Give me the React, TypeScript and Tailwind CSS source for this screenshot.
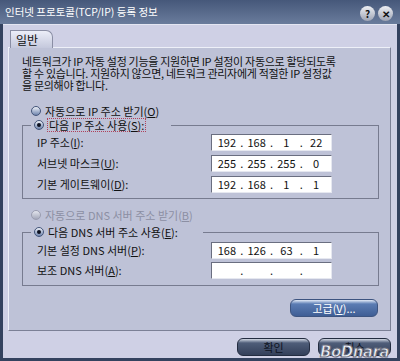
import React from 'react'

const FONT = { fontFamily: '"Noto Sans CJK KR", "Noto Sans", sans-serif' }

function Radio({ checked, disabled }: { checked?: boolean; disabled?: boolean }) {
  return (
    <span
      className={`inline-flex items-center justify-center w-[10px] h-[10px] rounded-full border ${
        disabled ? 'border-[#9a9db0] bg-gradient-to-b from-[#e4e6ee] to-[#a4a8ba]' : 'border-[#44557a] bg-gradient-to-b from-[#eef1f8] to-[#6f84ad]'
      }`}
    >
      {checked && <span className="w-[4px] h-[4px] rounded-full bg-[#0c1020]" />}
    </span>
  )
}

function Mn({ children }: { children: React.ReactNode }) {
  return <span className="underline underline-offset-1">{children}</span>
}

function IpBox({ parts }: { parts: string[] }) {
  return (
    <div className="w-[121px] h-[17px] bg-white border border-t-[#6a6e80] border-l-[#6a6e80] border-b-[#e6e8f0] border-r-[#e6e8f0] flex items-center px-[3px] text-[11px] text-[#111]">
      {parts.map((p, i) => (
        <React.Fragment key={i}>
          <span className="w-[24px] text-center">{p}</span>
          {i < 3 && <span className="w-[6px] text-center">.</span>}
        </React.Fragment>
      ))}
    </div>
  )
}

function Row({ label, parts }: { label: React.ReactNode; parts: string[] }) {
  return (
    <div className="flex items-center justify-between h-[17px] pl-[14px] pr-[46px]">
      <span>{label}</span>
      <IpBox parts={parts} />
    </div>
  )
}

function Btn({ children, light }: { children: React.ReactNode; light?: boolean }) {
  return (
    <div
      className={`h-[18px] rounded-[6px] flex items-center justify-center text-[11px] border ${
        light
          ? 'w-[88px] border-[#3d5480] text-white bg-gradient-to-b from-[#e4ebf7] from-0% via-[#5b7cb3] via-25% to-[#3f5e95]'
          : 'w-[73px] border-[#232c40] text-[#0d1220] bg-gradient-to-b from-[#d4d9e4] from-0% via-[#4f5d79] via-25% to-[#34405a]'
      }`}
    >
      {children}
    </div>
  )
}

export default function App() {
  return (
    <div className="w-[400px] h-[361px] bg-[#34425f] flex flex-col text-[#111]" style={FONT}>
      {/* Title bar */}
      <div className="h-[24px] flex items-center justify-between pl-[5px] pr-[7px] bg-gradient-to-b from-[#46587a] to-[#6a7c9c]">
        <span className="text-[10.5px] text-white">인터넷 프로토콜(TCP/IP) 등록 정보</span>
        <div className="flex gap-[3px] mt-[3px]">
          <span className="w-[15px] h-[15px] rounded-full bg-gradient-to-b from-[#eef0f4] to-[#9ea4b4] flex items-center justify-center text-[10px] font-bold text-[#111]">?</span>
          <span className="w-[15px] h-[15px] rounded-full bg-gradient-to-b from-[#eef0f4] to-[#9ea4b4] flex items-center justify-center text-[10px] font-bold text-[#111]">✕</span>
        </div>
      </div>

      {/* Body */}
      <div className="flex-1 mx-[3px] mb-[3px] bg-[#cfd0e5] border-t border-[#e4e6f2] pl-[5px] pr-[6px] pt-[5px] flex flex-col">
        {/* Tab */}
        <div className="ml-[2px] w-[43px] h-[18px] rounded-tr-[7px] border border-b-0 border-[#8a8ea4] bg-gradient-to-b from-[#eceef8] to-[#c4c8dc] text-[12px] pl-[5px] leading-[17px] relative z-10 -mb-[1px]">
          일반
        </div>

        {/* Panel */}
        <div className="h-[284px] bg-[#bec2d7] border border-[#eef0f8] border-r-[#7c8096] border-b-[#7c8096] pl-[13px] pr-[11px] pt-[7px] text-[11px] flex flex-col">
          <p className="leading-[12px] tracking-[-0.3px]">
            네트워크가 IP 자동 설정 기능을 지원하면 IP 설정이 자동으로 할당되도록
            <br />할 수 있습니다. 지원하지 않으면, 네트워크 관리자에게 적절한 IP 설정값
            <br />을 문의해야 합니다.
          </p>

          <div className="mt-[13px] h-[14px] flex items-center gap-[4px] pl-[9px]">
            <Radio />
            <span>
              자동으로 IP 주소 받기(<Mn>O</Mn>)
            </span>
          </div>

          <fieldset className="border border-[#777b8f] pt-[2px] pb-[5px] flex flex-col gap-[4px]">
            <legend className="ml-[8px] pr-[25px] h-[14px] flex items-center gap-[3px] pl-[3px]">
              <Radio checked />
              <span className="border border-dotted border-[#b0405a] px-[1px] leading-[12px]">
                다음 IP 주소 사용(<Mn>S</Mn>):
              </span>
            </legend>
            <Row label={<>IP 주소(<Mn>I</Mn>):</>} parts={['192', '168', '1', '22']} />
            <Row label={<>서브넷 마스크(<Mn>U</Mn>):</>} parts={['255', '255', '255', '0']} />
            <Row label={<>기본 게이트웨이(<Mn>D</Mn>):</>} parts={['192', '168', '1', '1']} />
          </fieldset>

          <div className="mt-[9px] h-[14px] flex items-center gap-[4px] pl-[9px] text-[#8c8fa3]">
            <Radio disabled />
            <span>
              자동으로 DNS 서버 주소 받기(<Mn>B</Mn>)
            </span>
          </div>

          <fieldset className="mt-[3px] border border-[#777b8f] pt-[3px] pb-[6px] flex flex-col gap-[3px]">
            <legend className="ml-[8px] pr-[25px] h-[14px] flex items-center gap-[4px] pl-[3px]">
              <Radio checked />
              <span>
                다음 DNS 서버 주소 사용(<Mn>E</Mn>):
              </span>
            </legend>
            <Row label={<>기본 설정 DNS 서버(<Mn>P</Mn>):</>} parts={['168', '126', '63', '1']} />
            <Row label={<>보조 DNS 서버(<Mn>A</Mn>):</>} parts={['', '', '', '']} />
          </fieldset>

          <div className="mt-[13px] flex justify-end pr-[1px]">
            <Btn light>
              고급(<Mn>V</Mn>)...
            </Btn>
          </div>
        </div>

        {/* Dialog buttons */}
        <div className="mt-[7px] flex justify-end gap-[8px] relative">
          <Btn>확인</Btn>
          <Btn>취소</Btn>
          <span
            className="absolute right-[2px] top-[7px] text-[15px] leading-[15px] font-black italic text-[#eef0f6] tracking-[-0.5px]"
            style={{ fontFamily: '"DejaVu Sans", sans-serif', WebkitTextStroke: '1px #6a6e7e' }}
          >
            BoDnara
          </span>
        </div>
      </div>
    </div>
  )
}
